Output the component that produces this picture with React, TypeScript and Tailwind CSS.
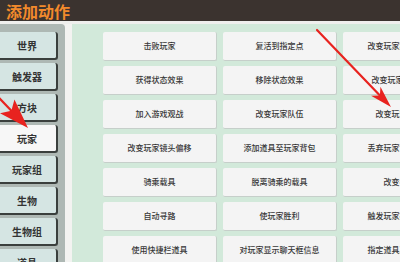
import React from "react";

const categories = ["世界", "触发器", "方块", "玩家", "玩家组", "生物", "生物组", "道具"];

const actions: string[][] = [
  ["击败玩家", "复活到指定点", "改变玩家默认属性"],
  ["获得状态效果", "移除状态效果", "改变玩家属性值"],
  ["加入游戏观战", "改变玩家队伍", "改变玩家视角"],
  ["改变玩家镜头偏移", "添加道具至玩家背包", "丢弃玩家背包物品"],
  ["骑乘载具", "脱离骑乘的载具", "改变视角"],
  ["自动寻路", "使玩家胜利", "触发玩家播放动画"],
  ["使用快捷栏道具", "对玩家显示聊天框信息", "指定道具冷却时间"],
];

const Arrow: React.FC<{ x1: number; y1: number; x2: number; y2: number; head?: number; half?: number }> = ({
  x1,
  y1,
  x2,
  y2,
  head = 22,
  half = 6.5,
}) => {
  const len = Math.hypot(x2 - x1, y2 - y1);
  const dx = (x2 - x1) / len;
  const dy = (y2 - y1) / len;
  const bx = x2 - dx * head;
  const by = y2 - dy * head;
  const nx = x2 - dx * (head - 6);
  const ny = y2 - dy * (head - 6);
  const pts = [
    [x2, y2],
    [bx - dy * half, by + dx * half],
    [nx, ny],
    [bx + dy * half, by - dx * half],
  ]
    .map((p) => p.join(","))
    .join(" ");
  return (
    <g>
      <line x1={x1} y1={y1} x2={nx} y2={ny} stroke="#e8231f" strokeWidth={2.2} strokeLinecap="round" />
      <polygon points={pts} fill="#e8231f" />
    </g>
  );
};

const App: React.FC = () => {
  const selected = "玩家";

  return (
    <div
      className="relative w-[400px] h-[262px] overflow-hidden bg-[#efefed]"
      style={{ fontFamily: '"Noto Sans CJK SC", "Noto Sans", sans-serif' }}
    >
      {/* Header */}
      <div className="h-[21px] bg-[#3b332f] flex items-center pl-[6px]">
        <span className="text-[16px] leading-none font-bold text-[#f28a2c]">添加动作</span>
      </div>

      <div className="flex pt-[3px] h-[241px]">
        {/* Sidebar */}
        <div className="w-[65px] shrink-0 bg-[#aeb8b4] rounded-tr-[4px] pt-[8px] flex flex-col gap-[3px]">
          {categories.map((c) => (
            <div
              key={c}
              className={
                c === selected
                  ? "w-[60px] h-[28px] shrink-0 -ml-[2px] flex items-center justify-center rounded-[3px] bg-[#f7f7f7] border-r-2 border-b-2 border-[#3a3f3d] text-[10px] font-bold text-[#333]"
                  : "w-[60px] h-[28px] shrink-0 -ml-[2px] flex items-center justify-center rounded-[3px] bg-[#d5e5e3] border-r-2 border-b-2 border-[#3a3f3d] text-[10px] font-bold text-[#333]"
              }
            >
              {c}
            </div>
          ))}
        </div>

        <div className="w-[7px] shrink-0 bg-[#f3f3f1]" />

        {/* Action grid */}
        <div className="flex-1 bg-[#d2e9da] pl-[31px] pt-[8px] overflow-hidden">
          <div className="grid grid-cols-[114px_114px_114px] gap-x-[6px] gap-y-[5px]">
            {actions.flat().map((a, i) => (
              <div
                key={i}
                className="h-[29px] flex items-center justify-center whitespace-nowrap rounded-[2px] bg-[#f4f4f4] border-r border-b border-[#c6cfca] text-[8px] font-medium text-[#383838]"
              >
                {a}
              </div>
            ))}
          </div>
        </div>
      </div>

      {/* Red annotation arrows */}
      <svg className="absolute inset-0 pointer-events-none" width={400} height={262}>
        <Arrow x1={317} y1={30} x2={391} y2={107} />
        <Arrow x1={-20} y1={78} x2={28} y2={128} head={30} half={10} />
      </svg>
    </div>
  );
};

export default App;
